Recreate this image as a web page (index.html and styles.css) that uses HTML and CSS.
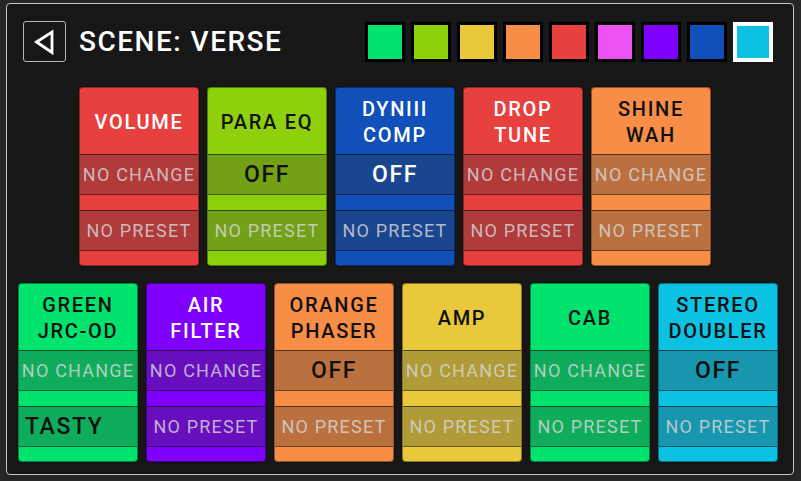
FILE: index.html
```html
<!DOCTYPE html>
<html>
<head>
<meta charset="utf-8">
<link rel="stylesheet" href="styles.css">
</head>
<body>
<div class="panel">
  <div class="top">
    <div class="back">
      <svg width="43" height="41" viewBox="0 0 43 41"><path d="M13.5 21 L29 11 L29 31.5 Z" fill="none" stroke="#fff" stroke-width="2.8" stroke-linejoin="miter"/></svg>
    </div>
    <div class="title">SCENE: VERSE</div>
    <div class="swatches">
      <div class="sw c-green"></div>
      <div class="sw c-lime"></div>
      <div class="sw c-yellow"></div>
      <div class="sw c-orange"></div>
      <div class="sw c-red"></div>
      <div class="sw c-pink"></div>
      <div class="sw c-purple"></div>
      <div class="sw c-blue"></div>
      <div class="sw c-cyan sel"></div>
    </div>
  </div>

  <div class="row row1">
    <div class="card c-red">
      <div class="head light">VOLUME</div>
      <div class="val"><span class="dim">NO CHANGE</span></div>
      <div class="strip"></div>
      <div class="val"><span class="dim">NO PRESET</span></div>
      <div class="foot"></div>
    </div>
    <div class="card c-lime">
      <div class="head">PARA EQ</div>
      <div class="val"><span class="big">OFF</span></div>
      <div class="strip"></div>
      <div class="val"><span class="dim">NO PRESET</span></div>
      <div class="foot"></div>
    </div>
    <div class="card c-blue">
      <div class="head light">DYNIII<br>COMP</div>
      <div class="val"><span class="big light">OFF</span></div>
      <div class="strip"></div>
      <div class="val"><span class="dim">NO PRESET</span></div>
      <div class="foot"></div>
    </div>
    <div class="card c-red">
      <div class="head light">DROP<br>TUNE</div>
      <div class="val"><span class="dim">NO CHANGE</span></div>
      <div class="strip"></div>
      <div class="val"><span class="dim">NO PRESET</span></div>
      <div class="foot"></div>
    </div>
    <div class="card c-orange">
      <div class="head">SHINE<br>WAH</div>
      <div class="val"><span class="dim">NO CHANGE</span></div>
      <div class="strip"></div>
      <div class="val"><span class="dim">NO PRESET</span></div>
      <div class="foot"></div>
    </div>
  </div>

  <div class="row row2">
    <div class="card c-green">
      <div class="head">GREEN<br>JRC-OD</div>
      <div class="val"><span class="dim">NO CHANGE</span></div>
      <div class="strip"></div>
      <div class="val left"><span class="big">TASTY</span></div>
      <div class="foot"></div>
    </div>
    <div class="card c-purple">
      <div class="head light">AIR<br>FILTER</div>
      <div class="val"><span class="dim">NO CHANGE</span></div>
      <div class="strip"></div>
      <div class="val"><span class="dim">NO PRESET</span></div>
      <div class="foot"></div>
    </div>
    <div class="card c-orange">
      <div class="head">ORANGE<br>PHASER</div>
      <div class="val"><span class="big">OFF</span></div>
      <div class="strip"></div>
      <div class="val"><span class="dim">NO PRESET</span></div>
      <div class="foot"></div>
    </div>
    <div class="card c-yellow">
      <div class="head">AMP</div>
      <div class="val"><span class="dim">NO CHANGE</span></div>
      <div class="strip"></div>
      <div class="val"><span class="dim">NO PRESET</span></div>
      <div class="foot"></div>
    </div>
    <div class="card c-green">
      <div class="head">CAB</div>
      <div class="val"><span class="dim">NO CHANGE</span></div>
      <div class="strip"></div>
      <div class="val"><span class="dim">NO PRESET</span></div>
      <div class="foot"></div>
    </div>
    <div class="card c-cyan">
      <div class="head">STEREO<br>DOUBLER</div>
      <div class="val"><span class="big">OFF</span></div>
      <div class="strip"></div>
      <div class="val"><span class="dim">NO PRESET</span></div>
      <div class="foot"></div>
    </div>
  </div>
</div>
</body>
</html>
```

FILE: styles.css
```css
* { box-sizing: border-box; }
html, body {
  margin: 0;
  padding: 0;
  width: 801px;
  height: 481px;
  overflow: hidden;
  background: #262626;
  font-family: Roboto, "Liberation Sans", sans-serif;
}
body { padding-top: 3px; padding-left: 6px; }
.panel {
  width: 788px;
  height: 472px;
  border: 1px solid #c4c4c4;
  border-radius: 4px;
  background: #171717;
  padding-top: 17px;
}
.top {
  display: flex;
  align-items: center;
  height: 41px;
  padding: 0 20px 0 16px;
}
.back {
  width: 43px;
  height: 41px;
  border: 1px solid #b8b8b8;
  border-radius: 3px;
  display: flex;
}
.back svg { display: block; margin: -1px; }
.title {
  margin-left: 13px;
  color: #fff;
  font-size: 28px;
  font-weight: 500;
  letter-spacing: 1.5px;
  line-height: 41px;
}
.swatches {
  margin-left: auto;
  display: flex;
  gap: 6px;
}
.sw {
  width: 40px;
  height: 40px;
  border: 3px solid #000;
}
.sw.sel { border: 4px solid #fff; }

.c-green { background: #00e36e; }
.c-lime { background: #8ed00c; }
.c-yellow { background: #e9c83c; }
.c-orange { background: #f78d46; }
.c-red { background: #e8403f; }
.c-pink { background: #ef52f4; }
.c-purple { background: #7f00fd; }
.c-blue { background: #1150b8; }
.c-cyan { background: #0cc2e2; }

.row { display: flex; gap: 8px; }
.row1 { margin-top: 25px; padding-left: 72px; }
.row2 { margin-top: 17px; padding-left: 11px; }

.card {
  width: 120px;
  height: 179px;
  border: 1px solid rgba(0,0,0,0.4);
  border-radius: 4px;
  box-shadow: 0 0 0 1px rgba(0,0,0,0.25);
  display: flex;
  flex-direction: column;
  overflow: hidden;
  color: #111;
}
.head {
  height: 66px;
  display: flex;
  align-items: center;
  justify-content: center;
  text-align: center;
  font-size: 20px;
  font-weight: 500;
  letter-spacing: 1.7px;
  line-height: 26px;
  padding-top: 2px;
}
.light { color: #fff; }
.val {
  height: 40px;
  border-top: 1px solid rgba(0,0,0,0.55);
  background: rgba(50,50,50,0.3);
  display: flex;
  align-items: center;
  justify-content: center;
  white-space: nowrap;
}
.val.left { justify-content: flex-start; padding-left: 6px; }
.strip {
  height: 16px;
  border-top: 1px solid rgba(0,0,0,0.55);
}
.foot {
  flex: 1;
  border-top: 1px solid rgba(0,0,0,0.55);
}
.dim {
  font-size: 18px;
  font-weight: 400;
  letter-spacing: 1.2px;
  color: rgba(215,215,215,0.82);
}
.big {
  font-size: 23px;
  font-weight: 500;
  letter-spacing: 1.6px;
  color: #111;
}
.big.light { color: #fff; }
```
